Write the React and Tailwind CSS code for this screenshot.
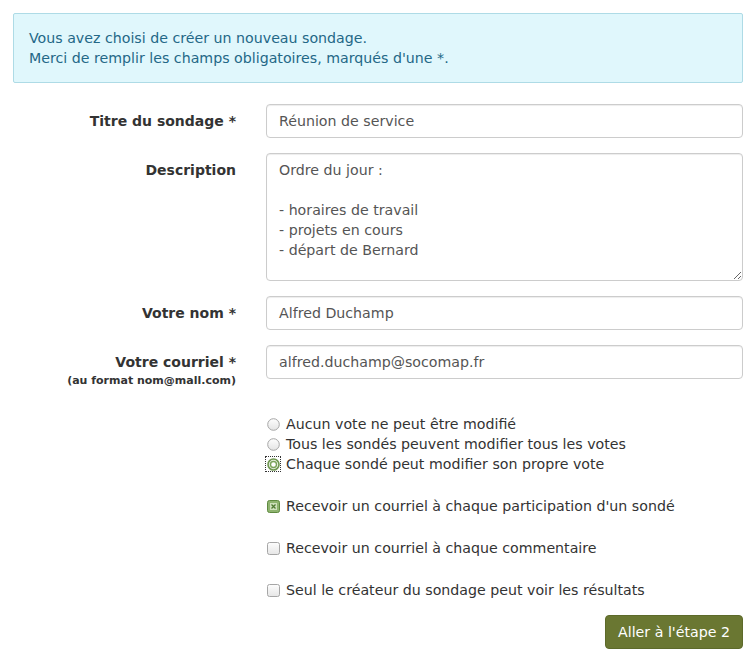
import React from "react";

const font = { fontFamily: '"DejaVu Sans", sans-serif' };

function Radio({ checked }) {
  if (checked) {
    return (
      <span className="inline-flex items-center justify-center w-[14px] h-[14px] outline-1 outline-dotted outline-[#333] mr-[6px] shrink-0">
        <svg width="13" height="13" viewBox="0 0 13 13">
          <circle cx="6.5" cy="6.5" r="5.5" fill="#e9f0e2" stroke="#6e9650" strokeWidth="1.6" />
          <circle cx="6.5" cy="6.5" r="3" fill="#ffffff" stroke="#7aa35a" strokeWidth="1.4" />
        </svg>
      </span>
    );
  }
  return (
    <span className="inline-flex items-center justify-center w-[14px] h-[14px] mr-[6px] shrink-0">
      <svg width="13" height="13" viewBox="0 0 13 13">
        <defs>
          <linearGradient id="rg" x1="0" y1="0" x2="0" y2="1">
            <stop offset="0" stopColor="#fdfdfd" />
            <stop offset="1" stopColor="#e4e4e4" />
          </linearGradient>
        </defs>
        <circle cx="6.5" cy="6.5" r="5.8" fill="url(#rg)" stroke="#a6a6a6" strokeWidth="1" />
      </svg>
    </span>
  );
}

function Check({ checked }) {
  if (checked) {
    return (
      <span className="inline-flex items-center justify-center w-[14px] h-[13px] mr-[6px] shrink-0">
        <svg width="13" height="13" viewBox="0 0 13 13">
          <rect x="0.5" y="0.5" width="12" height="12" rx="2" fill="#8eb36f" stroke="#5f8a40" />
          <rect x="3" y="3" width="7" height="7" fill="#cfe1bd" />
          <path d="M4.5 4.5 L8.5 8.5 M8.5 4.5 L4.5 8.5" stroke="#4f7a32" strokeWidth="1.3" />
        </svg>
      </span>
    );
  }
  return (
    <span className="inline-flex items-center justify-center w-[14px] h-[13px] mr-[6px] shrink-0">
      <svg width="13" height="13" viewBox="0 0 13 13">
        <defs>
          <linearGradient id="cg" x1="0" y1="0" x2="0" y2="1">
            <stop offset="0" stopColor="#fdfdfd" />
            <stop offset="1" stopColor="#e6e6e6" />
          </linearGradient>
        </defs>
        <rect x="0.5" y="0.5" width="12" height="12" rx="2" fill="url(#cg)" stroke="#a6a6a6" />
      </svg>
    </span>
  );
}

function Row({ label, sub, children, className = "" }) {
  return (
    <div className={"flex " + className}>
      <div className="w-[223px] shrink-0 text-right pt-[7px]">
        <div className="font-bold text-[14px] leading-[20px] text-[#333]">{label}</div>
        {sub && (
          <div className="font-bold text-[11px] leading-[16px] text-[#333] mt-[1px]">{sub}</div>
        )}
      </div>
      <div className="ml-[30px] flex-1">{children}</div>
    </div>
  );
}

function Input({ value }) {
  return (
    <div className="h-[34px] border border-[#ccc] rounded-[4px] px-[12px] flex items-center text-[14.2px] text-[#555] bg-white shadow-[inset_0_1px_1px_rgba(0,0,0,0.075)]">
      {value}
    </div>
  );
}

export default function App() {
  return (
    <div style={font} className="w-[756px] h-[664px] bg-white px-[13px] pt-[13px] text-[14.2px] leading-[20px] text-[#333]">
      <div className="border border-[#aedbe6] bg-[#e0f7fc] rounded-[2px] px-[15px] pt-[14px] pb-[14px] text-[#246887]">
        <div>Vous avez choisi de créer un nouveau sondage.</div>
        <div>Merci de remplir les champs obligatoires, marqués d'une *.</div>
      </div>

      <Row label="Titre du sondage *" className="mt-[21px]">
        <Input value="Réunion de service" />
      </Row>

      <Row label="Description" className="mt-[15px]">
        <textarea
          readOnly
          value={"Ordre du jour :\n\n- horaires de travail\n- projets en cours\n- départ de Bernard"}
          className="block w-full h-[128px] border border-[#ccc] rounded-[4px] px-[12px] py-[6px] text-[14.2px] leading-[20px] text-[#555] bg-white outline-none shadow-[inset_0_1px_1px_rgba(0,0,0,0.075)]"
          style={font}
        />
      </Row>

      <Row label="Votre nom *" className="mt-[15px]">
        <Input value="Alfred Duchamp" />
      </Row>

      <Row label="Votre courriel *" sub="(au format nom@mall.com)" className="mt-[15px]">
        <Input value="alfred.duchamp@socomap.fr" />
      </Row>

      <div className="ml-[253px] mt-[25px] leading-[20px] text-[#333]">
        <div className="flex items-center"><Radio />Aucun vote ne peut être modifié</div>
        <div className="flex items-center"><Radio />Tous les sondés peuvent modifier tous les votes</div>
        <div className="flex items-center"><Radio checked />Chaque sondé peut modifier son propre vote</div>

        <div className="flex items-center mt-[22px]"><Check checked />Recevoir un courriel à chaque participation d'un sondé</div>
        <div className="flex items-center mt-[22px]"><Check />Recevoir un courriel à chaque commentaire</div>
        <div className="flex items-center mt-[22px]"><Check />Seul le créateur du sondage peut voir les résultats</div>
      </div>

      <div className="flex justify-end mt-[15px]">
        <button style={font} className="h-[34px] w-[138px] bg-[#6a7732] border border-[#5d6a2a] rounded-[4px] text-white text-[14.2px] leading-[20px]">
          Aller à l'étape 2
        </button>
      </div>
    </div>
  );
}
